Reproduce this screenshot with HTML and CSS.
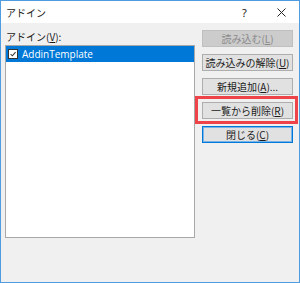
FILE: index.html
```html
<!DOCTYPE html>
<html lang="ja">
<head>
<meta charset="utf-8">
<link rel="stylesheet" href="styles.css">
</head>
<body>
<div class="window">
  <div class="titlebar">
    <span class="title">アドイン</span>
    <span class="help">?</span>
    <span class="close"><svg width="9" height="9" viewBox="0 0 9 9"><path d="M0.5 0.5 L8.5 8.5 M8.5 0.5 L0.5 8.5" stroke="#222" stroke-width="1" fill="none"/></svg></span>
  </div>
  <div class="content">
    <div class="left">
      <div class="label">アドイン(<u>V</u>):</div>
      <div class="listbox">
        <div class="row selected">
          <span class="check"><svg width="10" height="10" viewBox="0 0 10 10"><path d="M2 5 L4.2 7.2 L8.2 2.6" stroke="#333" stroke-width="1.3" fill="none"/></svg></span>
          <span class="item-text">AddinTemplate</span>
        </div>
      </div>
    </div>
    <div class="buttons">
      <button class="btn" disabled>読み込む(<u>L</u>)</button>
      <button class="btn">読み込みの解除(<u>U</u>)</button>
      <button class="btn">新規追加(<u>A</u>)...</button>
      <button class="btn">一覧から削除(<u>R</u>)</button>
      <button class="btn default">閉じる(<u>C</u>)</button>
      <div class="highlight"></div>
    </div>
  </div>
</div>
</body>
</html>
```

FILE: styles.css
```css
html, body {
  margin: 0;
  padding: 0;
  background: #f0f0f0;
}
.window {
  width: 300px;
  height: 283px;
  box-sizing: border-box;
  border: 1px solid #4f9de0;
  background: #f0f0f0;
  font-family: "Noto Sans CJK JP", "Noto Sans", sans-serif;
  color: #1a1a1a;
}
.titlebar {
  height: 22px;
  background: #ffffff;
  display: flex;
  align-items: center;
  position: relative;
}
.title {
  font-size: 10px;
  margin-left: 5px;
  color: #222;
}
.help {
  position: absolute;
  left: 241px;
  top: 4px;
  font-family: "Noto Sans", sans-serif;
  font-size: 11px;
  color: #222;
}
.close {
  position: absolute;
  left: 276px;
  top: 7px;
  display: flex;
}
.content {
  display: grid;
  grid-template-columns: 190px 91px;
  column-gap: 7px;
  padding: 7px 5px 0 4px;
}
.label {
  height: 15px;
  font-size: 10px;
  line-height: 13px;
  padding-left: 1px;
  color: #1a1a1a;
}
.listbox {
  height: 193px;
  box-sizing: border-box;
  border: 1px solid #a8a8a8;
  background: #ffffff;
}
.row {
  height: 16px;
  display: flex;
  align-items: center;
  padding-left: 2px;
}
.row.selected {
  background: #0078d7;
  color: #ffffff;
}
.check {
  width: 10px;
  height: 10px;
  box-sizing: border-box;
  border: 1px solid #333;
  background: #ffffff;
  display: flex;
  align-items: center;
  justify-content: center;
}
.check svg {
  width: 8px;
  height: 8px;
}
.item-text {
  margin-left: 4px;
  font-family: "Open Sans", "Noto Sans", sans-serif;
  font-size: 10px;
}
.buttons {
  position: relative;
  display: flex;
  flex-direction: column;
  gap: 7px;
}
.btn {
  height: 17px;
  margin: 0;
  padding: 0;
  box-sizing: border-box;
  border: 1px solid #adadad;
  background: #e1e1e1;
  font-family: "Noto Sans CJK JP", "Noto Sans", sans-serif;
  font-size: 10px;
  line-height: 1;
  color: #1a1a1a;
}
.btn:disabled {
  background: #cccccc;
  border-color: #bfbfbf;
  color: #8a8a8a;
}
.btn.default {
  border: 1px solid #0078d7;
  box-shadow: inset 0 0 0 1px #7ab4e6;
}
.highlight {
  position: absolute;
  left: -7px;
  top: 66px;
  width: 103px;
  height: 28px;
  box-sizing: border-box;
  border: 3px solid #ee4349;
  pointer-events: none;
}
```
